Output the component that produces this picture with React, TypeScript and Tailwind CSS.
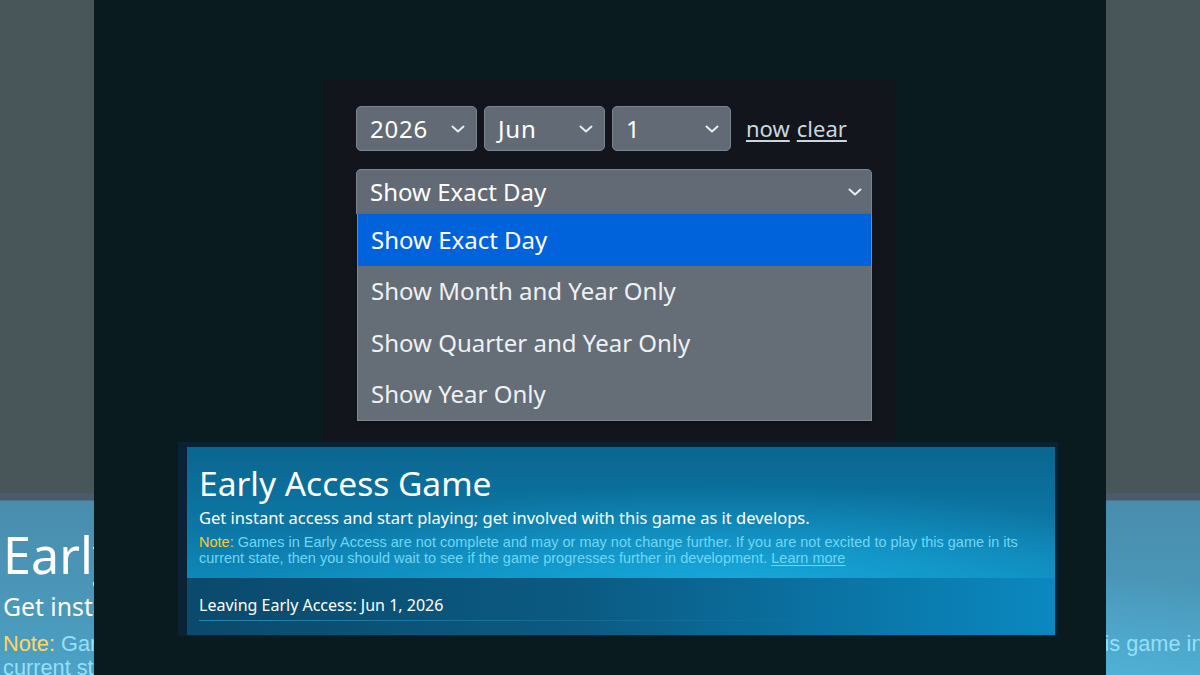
import React from "react";

const Chevron = () => (
  <svg width="14" height="8" viewBox="0 0 14 8" fill="none" className="shrink-0">
    <path d="M1.5 1.5 L7 6.5 L12.5 1.5" stroke="#e8ecef" strokeWidth="2" strokeLinecap="round" strokeLinejoin="round" />
  </svg>
);

function DateSelect({ value, width }: { value: string; width: string }) {
  return (
    <div
      className={`flex h-[45px] items-center justify-between rounded-[5px] border border-[#7c858e] bg-[#626b75] pl-[13px] pr-[11px] text-[24px] leading-none text-white ${width}`}
    >
      <span className="tracking-[0.8px]">{value}</span>
      <Chevron />
    </div>
  );
}

const options = ["Show Exact Day", "Show Month and Year Only", "Show Quarter and Year Only", "Show Year Only"];

function DatePanel() {
  return (
    <div className="ml-[323px] mt-[80px] h-[362px] w-[573px] bg-[#12161c] pl-[33px] pt-[26px] font-['Noto_Sans',sans-serif]">
      <div className="flex items-center gap-[7px]">
        <DateSelect value="2026" width="w-[121px]" />
        <DateSelect value="Jun" width="w-[121px]" />
        <DateSelect value="1" width="w-[119px]" />
        <div className="ml-[8px] flex gap-[7px] text-[22px] text-[#c9d6df]">
          <span className="underline underline-offset-[3px]">now</span>
          <span className="underline underline-offset-[3px]">clear</span>
        </div>
      </div>
      <div className="relative mt-[18px] w-[516px]">
        <div className="flex h-[45px] items-center justify-between rounded-t-[5px] border border-b-0 border-[#7c858e] bg-[#626b75] pl-[13px] pr-[9px] text-[24px] leading-none text-white">
          <span>Show Exact Day</span>
          <Chevron />
        </div>
        <div className="absolute left-[1px] right-0 top-full border border-t-0 border-[#80878f] bg-[#656d77] shadow-[0_2px_4px_rgba(0,0,0,0.4)]">
          {options.map((o, i) => (
            <div
              key={o}
              className={`flex h-[51.5px] items-center pl-[13px] text-[24px] leading-none ${
                i === 0 ? "bg-[#0063dc] text-white" : "text-[#eef1f3]"
              }`}
            >
              {o}
            </div>
          ))}
        </div>
      </div>
    </div>
  );
}

function EarlyAccessBox() {
  return (
    <div className="ml-[178px] w-[880px] bg-[#0a2136] pb-[1px] pl-[9px] pr-[3px] pt-[5px]">
      <div className="h-[131px] bg-[radial-gradient(ellipse_55%_70%_at_62%_100%,rgba(24,172,222,0.85)_0%,rgba(24,172,222,0)_100%),linear-gradient(180deg,#0b6690_0%,#0c76a4_60%,#0e88ba_100%)] pl-[12px] pt-[16px]">
        <div className="font-['Noto_Sans',sans-serif] text-[33.5px] leading-[40px] text-white">Early Access Game</div>
        <div className="mt-[5px] font-['Noto_Sans',sans-serif] text-[16.5px] leading-[20px] text-white">
          Get instant access and start playing; get involved with this game as it develops.
        </div>
        <div className="mt-[6px] w-[830px] font-['Liberation_Sans',Arial,sans-serif] text-[14.5px] leading-[16px] text-[#6fd6f7]">
          <span className="text-[#ffc82c]">Note:</span> Games in Early Access are not complete and may or may not
          change further. If you are not excited to play this game in its current state, then you should wait to see if
          the game progresses further in development.{" "}
          <span className="underline underline-offset-[2px]">Learn more</span>
        </div>
      </div>
      <div className="h-[57px] bg-[linear-gradient(90deg,#0a4a6c_0%,#0b5a82_45%,#0a78aa_80%,#0b88c0_100%)] pl-[12px] pt-[17px]">
        <div className="font-['Noto_Sans',sans-serif] text-[16px] leading-[20px] text-white">
          Leaving Early Access: Jun 1, 2026
        </div>
        <div className="mt-[5px] h-px w-[640px] bg-[linear-gradient(90deg,#2a86ad,rgba(42,134,173,0))]" />
      </div>
    </div>
  );
}

function Page() {
  return (
    <div className="flex h-[675px] w-[1200px] flex-col bg-[#0a1b20]">
      <DatePanel />
      <EarlyAccessBox />
    </div>
  );
}

export default function App() {
  return (
    <div className="relative h-[675px] w-[1200px] overflow-hidden bg-[#0a1b20]">
      {/* enlarged, washed-out copy of the page behind the main view */}
      <div className="absolute inset-0 overflow-hidden">
        <div className="origin-top-left [transform:translate(-295.5px,-170px)_scale(1.5)]">
          <Page />
        </div>
        <div className="absolute inset-0 bg-[rgba(255,255,255,0.26)]" />
      </div>
      {/* main view */}
      <div className="absolute left-[94px] top-0 h-[675px] w-[1012px] overflow-hidden">
        <div className="-ml-[94px]">
          <Page />
        </div>
      </div>
    </div>
  );
}
